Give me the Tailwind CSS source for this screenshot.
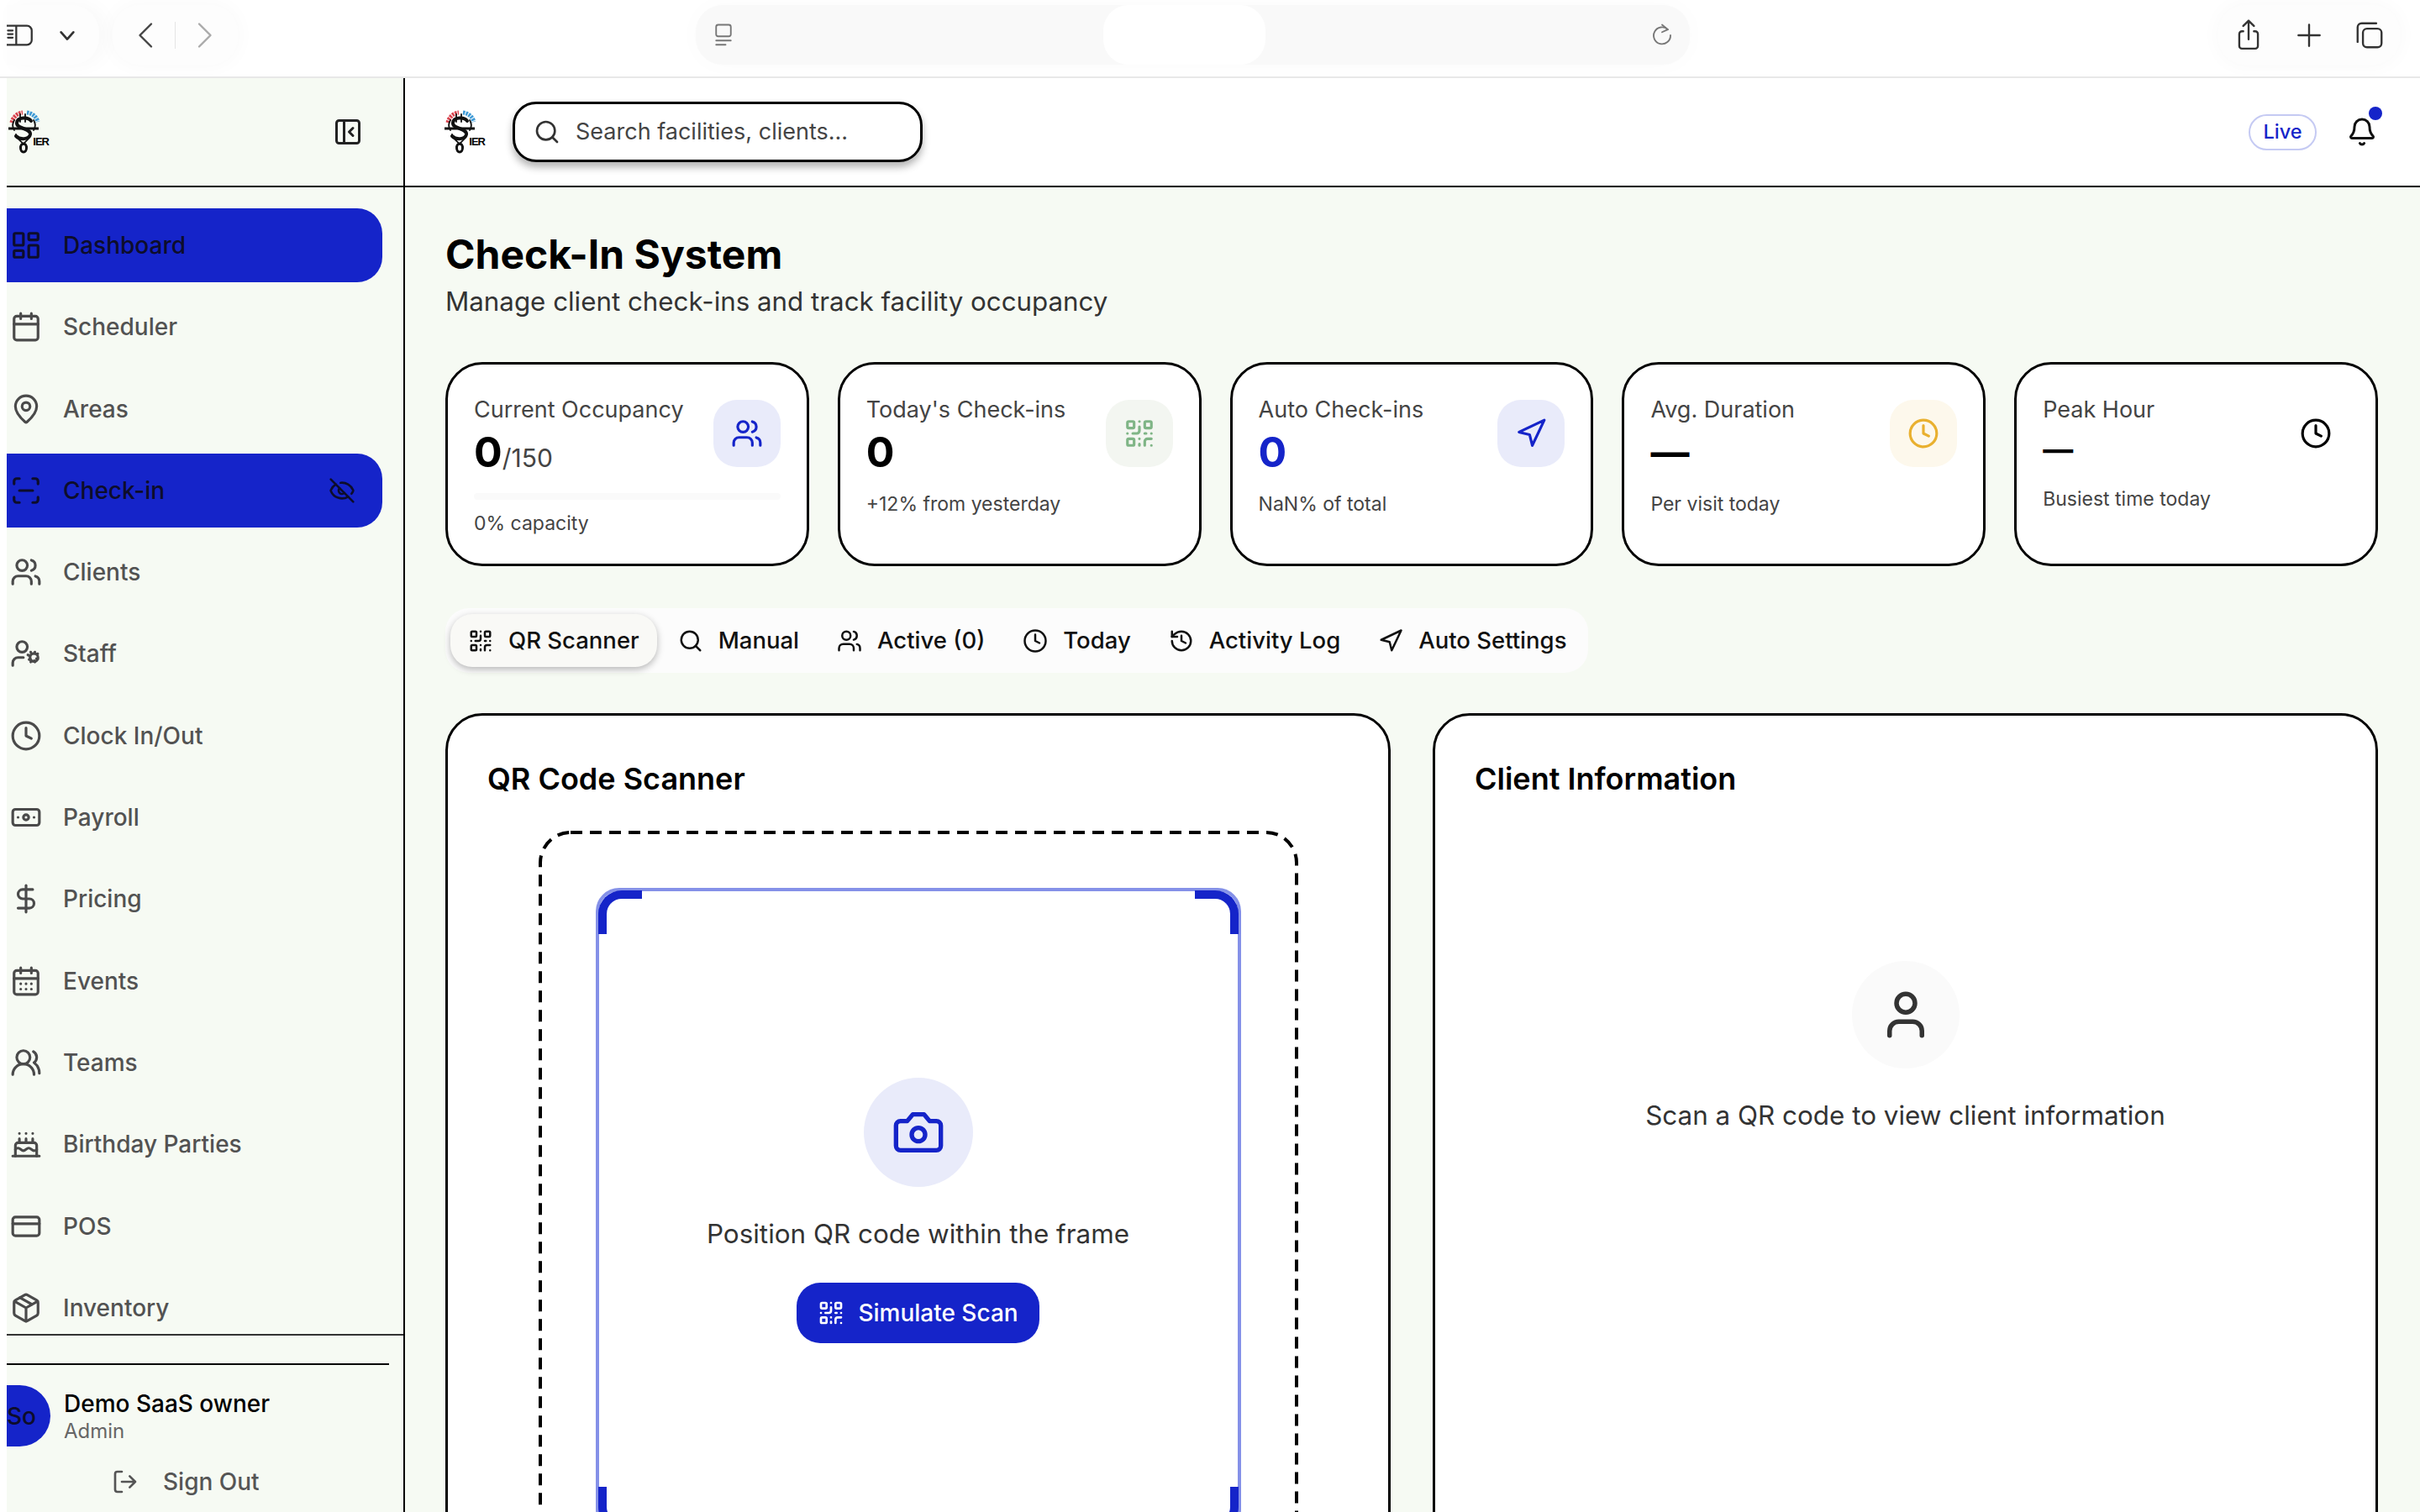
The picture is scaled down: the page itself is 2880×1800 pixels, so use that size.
<!DOCTYPE html>
<html lang="en">
<head>
  <meta charset="UTF-8" />
  <title>Check-In System</title>
  <script src="https://cdn.jsdelivr.net/npm/@tailwindcss/browser@4"></script>
</head>
<body class="bg-white font-['Inter',sans-serif] text-black [stroke-linecap:round] [stroke-linejoin:round]">
  <!-- icon set -->
  <svg class="hidden">
    <symbol id="i-dash" viewBox="0 0 24 24"><rect x="3" y="3" width="7" height="9" rx="1"/><rect x="14" y="3" width="7" height="5" rx="1"/><rect x="14" y="12" width="7" height="9" rx="1"/><rect x="3" y="16" width="7" height="5" rx="1"/></symbol>
    <symbol id="i-cal" viewBox="0 0 24 24"><path d="M8 2v4M16 2v4"/><rect x="3" y="4" width="18" height="18" rx="2"/><path d="M3 10h18"/></symbol>
    <symbol id="i-pin" viewBox="0 0 24 24"><path d="M20 10c0 4.993-5.539 10.193-7.399 11.799a1 1 0 0 1-1.202 0C9.539 20.193 4 14.993 4 10a8 8 0 0 1 16 0"/><circle cx="12" cy="10" r="3"/></symbol>
    <symbol id="i-scan" viewBox="0 0 24 24"><path d="M3 7V5a2 2 0 0 1 2-2h2M17 3h2a2 2 0 0 1 2 2v2M21 17v2a2 2 0 0 1-2 2h-2M7 21H5a2 2 0 0 1-2-2v-2M7 12h10"/></symbol>
    <symbol id="i-users" viewBox="0 0 24 24"><path d="M16 21v-2a4 4 0 0 0-4-4H6a4 4 0 0 0-4 4v2"/><path d="M16 3.128a4 4 0 0 1 0 7.744"/><path d="M22 21v-2a4 4 0 0 0-3-3.87"/><circle cx="9" cy="7" r="4"/></symbol>
    <symbol id="i-cog" viewBox="0 0 24 24"><path d="M10 15H6a4 4 0 0 0-4 4v2"/><path d="m14.305 16.53.923-.382m-.923-2.679-.923-.383m2.547-1.241-.383-.923m.383 6.467-.383.924m2.679-6.468.383-.923m0 7.391-.382-.924m1.624-4.82.924-.383m-.924 3.679.924.383"/><circle cx="18" cy="15" r="3"/><circle cx="9" cy="7" r="4"/></symbol>
    <symbol id="i-clock" viewBox="0 0 24 24"><circle cx="12" cy="12" r="10"/><path d="M12 6v6l4 2"/></symbol>
    <symbol id="i-note" viewBox="0 0 24 24"><rect x="2" y="6" width="20" height="12" rx="2"/><circle cx="12" cy="12" r="2"/><path d="M6 12h.01M18 12h.01"/></symbol>
    <symbol id="i-dollar" viewBox="0 0 24 24"><path d="M12 2v20"/><path d="M17 5H9.5a3.5 3.5 0 0 0 0 7h5a3.5 3.5 0 0 1 0 7H6"/></symbol>
    <symbol id="i-days" viewBox="0 0 24 24"><path d="M8 2v4M16 2v4"/><rect x="3" y="4" width="18" height="18" rx="2"/><path d="M3 10h18M8 14h.01M12 14h.01M16 14h.01M8 18h.01M12 18h.01M16 18h.01"/></symbol>
    <symbol id="i-round" viewBox="0 0 24 24"><path d="M18 21a8 8 0 0 0-16 0"/><circle cx="10" cy="8" r="5"/><path d="M22 20c0-3.37-2-6.5-4-8a5 5 0 0 0-.45-8.3"/></symbol>
    <symbol id="i-cake" viewBox="0 0 24 24"><path d="M20 21v-8a2 2 0 0 0-2-2H6a2 2 0 0 0-2 2v8"/><path d="M4 16s.5-1 2-1 2.5 2 4 2 2.5-2 4-2 2.5 2 4 2 2-1 2-1"/><path d="M2 21h20M7 8v3M12 8v3M17 8v3M7 4h.01M12 4h.01M17 4h.01"/></symbol>
    <symbol id="i-card" viewBox="0 0 24 24"><rect x="2" y="5" width="20" height="14" rx="2"/><path d="M2 10h20"/></symbol>
    <symbol id="i-box" viewBox="0 0 24 24"><path d="M11 21.73a2 2 0 0 0 2 0l7-4A2 2 0 0 0 21 16V8a2 2 0 0 0-1-1.73l-7-4a2 2 0 0 0-2 0l-7 4A2 2 0 0 0 3 8v8a2 2 0 0 0 1 1.73z"/><path d="M12 22V12M3.3 7 12 12l8.7-5M7.5 4.27l9 5.15"/></symbol>
    <symbol id="i-out" viewBox="0 0 24 24"><path d="m16 17 5-5-5-5M21 12H9M9 21H5a2 2 0 0 1-2-2V5a2 2 0 0 1 2-2h4"/></symbol>
    <symbol id="i-eyeoff" viewBox="0 0 24 24"><path d="M10.733 5.076a10.744 10.744 0 0 1 11.205 6.575 1 1 0 0 1 0 .696 10.747 10.747 0 0 1-1.444 2.49"/><path d="M14.084 14.158a3 3 0 0 1-4.242-4.242"/><path d="M17.479 17.499a10.75 10.75 0 0 1-15.417-5.151 1 1 0 0 1 0-.696 10.75 10.75 0 0 1 4.446-5.143"/><path d="m2 2 20 20"/></symbol>
    <symbol id="i-collapse" viewBox="0 0 24 24"><rect x="3" y="3" width="18" height="18" rx="2"/><path d="M9 3v18M16 15l-3-3 3-3"/></symbol>
    <symbol id="i-search" viewBox="0 0 24 24"><path d="m21 21-4.34-4.34"/><circle cx="11" cy="11" r="8"/></symbol>
    <symbol id="i-bell" viewBox="0 0 24 24"><path d="M10.268 21a2 2 0 0 0 3.464 0"/><path d="M3.262 15.326A1 1 0 0 0 4 17h16a1 1 0 0 0 .74-1.673C19.41 13.956 18 12.499 18 8A6 6 0 0 0 6 8c0 4.499-1.411 5.956-2.738 7.326"/></symbol>
    <symbol id="i-qr" viewBox="0 0 24 24"><rect x="3" y="3" width="5" height="5" rx="1"/><rect x="16" y="3" width="5" height="5" rx="1"/><rect x="3" y="16" width="5" height="5" rx="1"/><path d="M21 16h-3a2 2 0 0 0-2 2v3M21 21v.01M12 7v3a2 2 0 0 1-2 2H7M3 12h.01M12 3h.01M12 16v.01M16 12h1M21 12v.01M12 21v-1"/></symbol>
    <symbol id="i-nav" viewBox="0 0 24 24"><path d="M3 11 22 2l-9 19-2-8z"/></symbol>
    <symbol id="i-hist" viewBox="0 0 24 24"><path d="M3 12a9 9 0 1 0 9-9 9.75 9.75 0 0 0-6.74 2.74L3 8"/><path d="M3 3v5h5M12 7v5l4 2"/></symbol>
    <symbol id="i-cam" viewBox="0 0 24 24"><path d="M14.5 4h-5L7 7H4a2 2 0 0 0-2 2v9a2 2 0 0 0 2 2h16a2 2 0 0 0 2-2V9a2 2 0 0 0-2-2h-3l-2.5-3z"/><circle cx="12" cy="13" r="3"/></symbol>
    <symbol id="i-user" viewBox="0 0 24 24"><path d="M19 21v-2a4 4 0 0 0-4-4H9a4 4 0 0 0-4 4v2"/><circle cx="12" cy="7" r="4"/></symbol>
    <symbol id="i-logo" viewBox="0 0 48 52">
      <path d="M5 15a15 15 0 0 1 13-12" fill="none" stroke="#d9434e" stroke-width="5" stroke-linecap="butt" stroke-dasharray="2.500 1"/>
      <path d="M23 3a15 15 0 0 1 13 11" fill="none" stroke="#3f9ad6" stroke-width="5" stroke-linecap="butt" stroke-dasharray="2.500 1"/>
      <path d="M1 22h36" fill="none" stroke="#111" stroke-width="3" stroke-linecap="butt"/>
      <path d="M28 13c-3-5-16-5-17 2-1 8 17 6 16 14-1 6-12 7-17 2" fill="none" stroke="#111" stroke-width="4"/>
      <path d="M15 5v9M21 5v9M8 12c-3 5-2 9 0 12M31 12c3 5 2 9 0 12M10 29c1 6 7 8 9 12M27 29c0 6-7 8-8 12" fill="none" stroke="#111" stroke-width="1.800"/>
      <ellipse cx="19" cy="45" rx="3.500" ry="5" fill="none" stroke="#111" stroke-width="3"/>
    </symbol>
  </svg>

  <div class="w-[2880px] h-[1800px] overflow-hidden flex flex-col">
    <!-- browser toolbar -->
    <div class="h-[93px] shrink-0 border-b-2 border-[#e8e8e8] bg-white flex pt-[6px] pl-[8px] pr-[24px]">
      <div class="w-[110px] h-[71px] rounded-r-[32px] bg-[#fdfdfd] shadow-[8px_0_24px_rgba(0,0,0,0.03)] flex items-center gap-[27px] text-[#333]">
        <svg class="w-[34px] h-[34px] fill-none stroke-current stroke-[1.6]" viewBox="0 0 24 24"><path d="M0 4h17a4 4 0 0 1 4 4v8a4 4 0 0 1-4 4H0M8 4v16"/><path d="M1 8h4M1 11h4M1 14h4" /></svg>
        <svg class="w-[22px] h-[22px] fill-none stroke-current stroke-[3]" viewBox="0 0 24 24"><path d="m4 8 8 9 8-9"/></svg>
      </div>
      <div class="ml-[16px] w-[149px] h-[71px] rounded-[32px] bg-[#fdfdfd] shadow-[0_0_24px_rgba(0,0,0,0.03)] flex items-center justify-center gap-[16px]">
        <svg class="w-[36px] h-[36px] fill-none stroke-[#444] stroke-[1.6]" viewBox="0 0 24 24"><path d="m16 3-9 9 9 9"/></svg>
        <div class="w-px h-[32px] bg-[#e5e5e5]"></div>
        <svg class="w-[36px] h-[36px] fill-none stroke-[#aaa] stroke-[1.6]" viewBox="0 0 24 24"><path d="m8 3 9 9-9 9"/></svg>
      </div>
      <div class="w-[1183px] h-[71px] ml-[545px] rounded-[32px] bg-[#f9f9f9] shadow-[0_0_30px_rgba(0,0,0,0.02)] flex items-center px-[18px]">
        <svg class="w-[30px] h-[30px] fill-none stroke-[#777] stroke-[1.5]" viewBox="0 0 24 24"><rect x="5" y="2" width="14" height="11" rx="2"/><path d="M5 17h14M5 21h9"/></svg>
        <div class="w-[193px] h-[71px] ml-[437px] rounded-[30px] bg-white"></div>
        <svg class="ml-auto w-[30px] h-[30px] fill-none stroke-[#777] stroke-[1.5]" viewBox="0 0 24 24"><path d="M17.500 6.500A8 8 0 1 0 20 12"/><path d="M12 2l5.500 4.500L12 9"/></svg>
      </div>
      <div class="ml-auto w-[216px] h-[71px] rounded-[32px] bg-[#fdfdfd] shadow-[0_0_24px_rgba(0,0,0,0.03)] flex items-center justify-center gap-[34px] text-[#333]">
        <svg class="w-[38px] h-[38px] fill-none stroke-current stroke-[1.5]" viewBox="0 0 24 24"><path d="M8 9H7a2 2 0 0 0-2 2v9a2 2 0 0 0 2 2h10a2 2 0 0 0 2-2v-9a2 2 0 0 0-2-2h-1M12 15V1M8 5l4-4 4 4"/></svg>
        <svg class="w-[38px] h-[38px] fill-none stroke-current stroke-[1.5]" viewBox="0 0 24 24"><path d="M12 4v16M4 12h16"/></svg>
        <svg class="w-[38px] h-[38px] fill-none stroke-current stroke-[1.5]" viewBox="0 0 24 24"><rect x="7" y="7" width="14" height="14" rx="3"/><path d="M17 3H6a3 3 0 0 0-3 3v11"/></svg>
      </div>
    </div>

    <div class="flex-1 flex pl-[8px] min-h-0">
      <!-- sidebar -->
      <aside class="w-[474px] shrink-0 flex flex-col bg-[#f6faf3] border-r-2 border-black">
        <div class="h-[130px] shrink-0 border-b-2 border-black flex items-center justify-between pl-[1px] pr-[48px]">
          <div class="relative w-[48px] h-[52px]">
            <svg class="w-[48px] h-[52px]"><use href="#i-logo"/></svg>
            <span class="absolute -right-[1px] bottom-[8px] font-['Liberation_Sans',sans-serif] font-bold text-[13px] leading-none tracking-[-1px]">IER</span>
          </div>
          <svg class="w-[36px] h-[36px] fill-none stroke-[#222] stroke-2"><use href="#i-collapse"/></svg>
        </div>
        <nav class="h-[1365px] shrink-0 overflow-hidden flex flex-col gap-[9.3px] pt-[25px] pr-[25px] text-[28px] font-medium text-[#525252]">
          <a class="h-[88px] shrink-0 flex items-center pl-[4px] gap-[25px] rounded-r-[30px] bg-[#1524c9] text-[#0d0d2b]"><svg class="w-[38px] h-[38px] shrink-0 fill-none stroke-current stroke-2"><use href="#i-dash"/></svg>Dashboard</a>
          <a class="h-[88px] shrink-0 flex items-center pl-[4px] gap-[25px]"><svg class="w-[38px] h-[38px] shrink-0 fill-none stroke-[#4a4a4a] stroke-2"><use href="#i-cal"/></svg>Scheduler</a>
          <a class="h-[88px] shrink-0 flex items-center pl-[4px] gap-[25px]"><svg class="w-[38px] h-[38px] shrink-0 fill-none stroke-[#4a4a4a] stroke-2"><use href="#i-pin"/></svg>Areas</a>
          <a class="h-[88px] shrink-0 flex items-center justify-between pl-[4px] pr-[32px] rounded-r-[30px] bg-[#1524c9] text-[#0d0d2b]"><span class="flex items-center gap-[25px]"><svg class="w-[38px] h-[38px] shrink-0 fill-none stroke-current stroke-2"><use href="#i-scan"/></svg>Check-in</span><svg class="w-[32px] h-[32px] fill-none stroke-current stroke-2"><use href="#i-eyeoff"/></svg></a>
          <a class="h-[88px] shrink-0 flex items-center pl-[4px] gap-[25px]"><svg class="w-[38px] h-[38px] shrink-0 fill-none stroke-[#4a4a4a] stroke-2"><use href="#i-users"/></svg>Clients</a>
          <a class="h-[88px] shrink-0 flex items-center pl-[4px] gap-[25px]"><svg class="w-[38px] h-[38px] shrink-0 fill-none stroke-[#4a4a4a] stroke-2"><use href="#i-cog"/></svg>Staff</a>
          <a class="h-[88px] shrink-0 flex items-center pl-[4px] gap-[25px]"><svg class="w-[38px] h-[38px] shrink-0 fill-none stroke-[#4a4a4a] stroke-2"><use href="#i-clock"/></svg>Clock In/Out</a>
          <a class="h-[88px] shrink-0 flex items-center pl-[4px] gap-[25px]"><svg class="w-[38px] h-[38px] shrink-0 fill-none stroke-[#4a4a4a] stroke-2"><use href="#i-note"/></svg>Payroll</a>
          <a class="h-[88px] shrink-0 flex items-center pl-[4px] gap-[25px]"><svg class="w-[38px] h-[38px] shrink-0 fill-none stroke-[#4a4a4a] stroke-2"><use href="#i-dollar"/></svg>Pricing</a>
          <a class="h-[88px] shrink-0 flex items-center pl-[4px] gap-[25px]"><svg class="w-[38px] h-[38px] shrink-0 fill-none stroke-[#4a4a4a] stroke-2"><use href="#i-days"/></svg>Events</a>
          <a class="h-[88px] shrink-0 flex items-center pl-[4px] gap-[25px]"><svg class="w-[38px] h-[38px] shrink-0 fill-none stroke-[#4a4a4a] stroke-2"><use href="#i-round"/></svg>Teams</a>
          <a class="h-[88px] shrink-0 flex items-center pl-[4px] gap-[25px]"><svg class="w-[38px] h-[38px] shrink-0 fill-none stroke-[#4a4a4a] stroke-2"><use href="#i-cake"/></svg>Birthday Parties</a>
          <a class="h-[88px] shrink-0 flex items-center pl-[4px] gap-[25px]"><svg class="w-[38px] h-[38px] shrink-0 fill-none stroke-[#4a4a4a] stroke-2"><use href="#i-card"/></svg>POS</a>
          <a class="h-[88px] shrink-0 flex items-center pl-[4px] gap-[25px]"><svg class="w-[38px] h-[38px] shrink-0 fill-none stroke-[#4a4a4a] stroke-2"><use href="#i-box"/></svg>Inventory</a>
        </nav>
        <div class="flex-1 border-t-2 border-[#333] pt-[33px] overflow-hidden">
          <div class="w-[455px] border-t-2 border-black pt-[24px]">
            <div class="flex items-center gap-[16px]">
              <div class="w-[52px] h-[73px] shrink-0 rounded-r-full bg-[#1524c9] flex items-center text-[28px] font-medium text-[#0d0d2b]">So</div>
              <div>
                <div class="text-[28px] leading-[36px] font-medium">Demo SaaS owner</div>
                <div class="text-[24px] leading-[30px] text-[#666]">Admin</div>
              </div>
            </div>
            <div class="mt-[22px] pl-[125px] flex items-center gap-[29px] text-[28px] leading-[40px] font-medium text-[#555]">
              <svg class="w-[32px] h-[32px] fill-none stroke-current stroke-2"><use href="#i-out"/></svg>Sign Out
            </div>
          </div>
        </div>
      </aside>

      <!-- main -->
      <div class="flex-1 min-w-0 flex flex-col bg-[#f6faf3]">
        <header class="h-[130px] shrink-0 bg-white border-b-2 border-black flex items-center pl-[46px] pr-[51px]">
          <div class="relative w-[48px] h-[52px] shrink-0">
            <svg class="w-[48px] h-[52px]"><use href="#i-logo"/></svg>
            <span class="absolute -right-[1px] bottom-[8px] font-['Liberation_Sans',sans-serif] font-bold text-[13px] leading-none tracking-[-1px]">IER</span>
          </div>
          <div class="ml-[34px] w-[488px] h-[72px] rounded-[28px] border-[3px] border-black bg-white shadow-[0_6px_10px_rgba(0,0,0,0.3)] flex items-center pl-[22px] gap-[18px] text-[27px] text-[#444]">
            <svg class="w-[32px] h-[32px] fill-none stroke-[#333] stroke-2"><use href="#i-search"/></svg>Search facilities, clients...
          </div>
          <div class="ml-auto w-[81px] h-[43px] rounded-full border-2 border-[#c5caf3] flex items-center justify-center text-[23.5px] font-medium text-[#1524c9]">Live</div>
          <div class="relative ml-[36px] w-[36px] h-[36px]">
            <svg class="w-[36px] h-[36px] fill-none stroke-[#111] stroke-2"><use href="#i-bell"/></svg>
            <span class="absolute -right-[6px] -top-[12px] w-[16px] h-[16px] rounded-full bg-[#1524c9]"></span>
          </div>
        </header>

        <main class="flex-1 min-h-0 overflow-hidden pl-[48px] pr-[50px]">
          <h1 class="mt-[50px] text-[48px] leading-[60px] font-bold">Check-In System</h1>
          <p class="text-[31.3px] leading-[44px] text-[#333] mt-[4px]">Manage client check-ins and track facility occupancy</p>

          <!-- stat cards -->
          <div class="mt-[50px] grid grid-cols-5 gap-[34px]">
            <div class="h-[243px] rounded-[44px] border-[3px] border-black bg-white pl-[31px] pr-[31px] pt-[35px]">
              <div class="flex justify-between">
                <div>
                  <div class="text-[27px] leading-[38px] text-[#444]">Current Occupancy</div>
                  <div class="mt-[1px] leading-[60px] text-[50px] font-bold">0<span class="text-[30px] font-normal text-[#444]">/150</span></div>
                </div>
                <div class="w-[80px] h-[80px] mt-[7px] rounded-[28px] bg-[#e9ebfa] flex items-center justify-center"><svg class="w-[38px] h-[38px] fill-none stroke-[#1524c9] stroke-2"><use href="#i-users"/></svg></div>
              </div>
              <div class="mt-[12px] h-[8px] w-full rounded-full bg-[#fafafa]"></div>
              <div class="mt-[12px] text-[23px] leading-[32px] text-[#444]">0% capacity</div>
            </div>
            <div class="h-[243px] rounded-[44px] border-[3px] border-black bg-white pl-[31px] pr-[31px] pt-[35px]">
              <div class="flex justify-between">
                <div>
                  <div class="text-[27px] leading-[38px] text-[#444]">Today's Check-ins</div>
                  <div class="mt-[1px] leading-[60px] text-[50px] font-bold">0</div>
                </div>
                <div class="w-[80px] h-[80px] mt-[7px] rounded-[28px] bg-[#f3f6f1] flex items-center justify-center"><svg class="w-[38px] h-[38px] fill-none stroke-[#7fb586] stroke-2"><use href="#i-qr"/></svg></div>
              </div>
              <div class="mt-[16px] text-[23px] leading-[32px] text-[#444]">+12% from yesterday</div>
            </div>
            <div class="h-[243px] rounded-[44px] border-[3px] border-black bg-white pl-[31px] pr-[31px] pt-[35px]">
              <div class="flex justify-between">
                <div>
                  <div class="text-[27px] leading-[38px] text-[#444]">Auto Check-ins</div>
                  <div class="mt-[1px] leading-[60px] text-[50px] font-bold text-[#1524c9]">0</div>
                </div>
                <div class="w-[80px] h-[80px] mt-[7px] rounded-[28px] bg-[#e9ebfa] flex items-center justify-center"><svg class="w-[38px] h-[38px] fill-none stroke-[#1524c9] stroke-2"><use href="#i-nav"/></svg></div>
              </div>
              <div class="mt-[16px] text-[23px] leading-[32px] text-[#444]">NaN% of total</div>
            </div>
            <div class="h-[243px] rounded-[44px] border-[3px] border-black bg-white pl-[31px] pr-[31px] pt-[35px]">
              <div class="flex justify-between">
                <div>
                  <div class="text-[27px] leading-[38px] text-[#444]">Avg. Duration</div>
                  <div class="mt-[1px] leading-[60px] text-[46px] font-bold">—</div>
                </div>
                <div class="w-[80px] h-[80px] mt-[7px] rounded-[28px] bg-[#fdf8ec] flex items-center justify-center"><svg class="w-[38px] h-[38px] fill-none stroke-[#e9b02f] stroke-2"><use href="#i-clock"/></svg></div>
              </div>
              <div class="mt-[16px] text-[23px] leading-[32px] text-[#444]">Per visit today</div>
            </div>
            <div class="h-[243px] rounded-[44px] border-[3px] border-black bg-white pl-[31px] pr-[31px] pt-[35px]">
              <div class="flex justify-between">
                <div>
                  <div class="text-[27px] leading-[38px] text-[#444]">Peak Hour</div>
                  <div class="mt-[1px] leading-[54px] text-[36px] font-bold">—</div>
                </div>
                <div class="w-[80px] h-[80px] mt-[7px] flex items-center justify-center"><svg class="w-[38px] h-[38px] fill-none stroke-black stroke-2"><use href="#i-clock"/></svg></div>
              </div>
              <div class="mt-[16px] text-[23px] leading-[32px] text-[#444]">Busiest time today</div>
            </div>
          </div>

          <!-- tabs -->
          <div class="mt-[50px] w-fit h-[77px] rounded-[28px] bg-[#fcfcfc] flex items-center px-[6px] gap-[5px] text-[27.5px] font-medium text-[#111]">
            <div class="h-[63px] px-[21px] flex items-center gap-[18px] rounded-[26px] bg-[#f9f9f6] shadow-[0_3px_8px_rgba(0,0,0,0.28)]"><svg class="w-[30px] h-[30px] fill-none stroke-current stroke-2"><use href="#i-qr"/></svg>QR Scanner</div>
            <div class="h-[63px] px-[20px] flex items-center gap-[18px]"><svg class="w-[30px] h-[30px] fill-none stroke-current stroke-2"><use href="#i-search"/></svg>Manual</div>
            <div class="h-[63px] px-[20px] flex items-center gap-[18px]"><svg class="w-[30px] h-[30px] fill-none stroke-current stroke-2"><use href="#i-users"/></svg>Active (0)</div>
            <div class="h-[63px] px-[20px] flex items-center gap-[18px]"><svg class="w-[30px] h-[30px] fill-none stroke-current stroke-2"><use href="#i-clock"/></svg>Today</div>
            <div class="h-[63px] px-[20px] flex items-center gap-[18px]"><svg class="w-[30px] h-[30px] fill-none stroke-current stroke-2"><use href="#i-hist"/></svg>Activity Log</div>
            <div class="h-[63px] px-[20px] flex items-center gap-[18px]"><svg class="w-[30px] h-[30px] fill-none stroke-current stroke-2"><use href="#i-nav"/></svg>Auto Settings</div>
          </div>

          <!-- panels -->
          <div class="mt-[48px] grid grid-cols-2 gap-[50px]">
            <section class="h-[1000px] rounded-[44px] border-[3px] border-black bg-white pt-[47px]">
              <h2 class="pl-[47px] text-[36px] leading-[56px] font-semibold">QR Code Scanner</h2>
              <div class="relative mx-auto mt-[34px] w-[904px] px-[68px] pt-[68px]">
                <svg class="absolute inset-0 w-[904px] h-[960px] fill-none stroke-black stroke-[4] [stroke-linecap:butt] [stroke-dasharray:14_9]"><rect x="2" y="2" width="900" height="956" rx="36"/></svg>
                <div class="relative w-[768px] h-[768px] rounded-[28px] border-[4px] border-[#8591e8] flex flex-col items-center justify-center">
                  <span class="absolute -top-[1px] -left-[1px] w-[52px] h-[52px] border-t-[10px] border-l-[10px] border-[#1524c9] rounded-tl-[28px]"></span>
                  <span class="absolute -top-[1px] -right-[1px] w-[52px] h-[52px] border-t-[10px] border-r-[10px] border-[#1524c9] rounded-tr-[28px]"></span>
                  <span class="absolute -bottom-[1px] -left-[1px] w-[52px] h-[52px] border-b-[10px] border-l-[10px] border-[#1524c9] rounded-bl-[28px]"></span>
                  <span class="absolute -bottom-[1px] -right-[1px] w-[52px] h-[52px] border-b-[10px] border-r-[10px] border-[#1524c9] rounded-br-[28px]"></span>
                  <div class="w-[130px] h-[130px] rounded-full bg-[#e9ebfa] flex items-center justify-center"><svg class="w-[64px] h-[64px] fill-none stroke-[#1524c9] stroke-2"><use href="#i-cam"/></svg></div>
                  <p class="mt-[36px] text-[31.4px] leading-[40px] text-[#333]">Position QR code within the frame</p>
                  <div class="mt-[38px] h-[72px] w-[289px] rounded-[28px] bg-[#1524c9] flex items-center justify-center gap-[16px] text-[28px] font-medium text-white"><svg class="w-[32px] h-[32px] fill-none stroke-white stroke-2"><use href="#i-qr"/></svg>Simulate Scan</div>
                </div>
              </div>
            </section>
            <section class="h-[1000px] rounded-[44px] border-[3px] border-black bg-white pt-[47px]">
              <h2 class="pl-[47px] text-[36px] leading-[56px] font-semibold">Client Information</h2>
              <div class="mt-[189px] flex flex-col items-center">
                <div class="w-[128px] h-[128px] rounded-full bg-[#fafafa] flex items-center justify-center"><svg class="w-[66px] h-[66px] fill-none stroke-[#333] stroke-2"><use href="#i-user"/></svg></div>
                <p class="mt-[36px] text-[31.4px] leading-[40px] text-[#333]">Scan a QR code to view client information</p>
              </div>
            </section>
          </div>
        </main>
      </div>
    </div>
  </div>
</body>
</html>
